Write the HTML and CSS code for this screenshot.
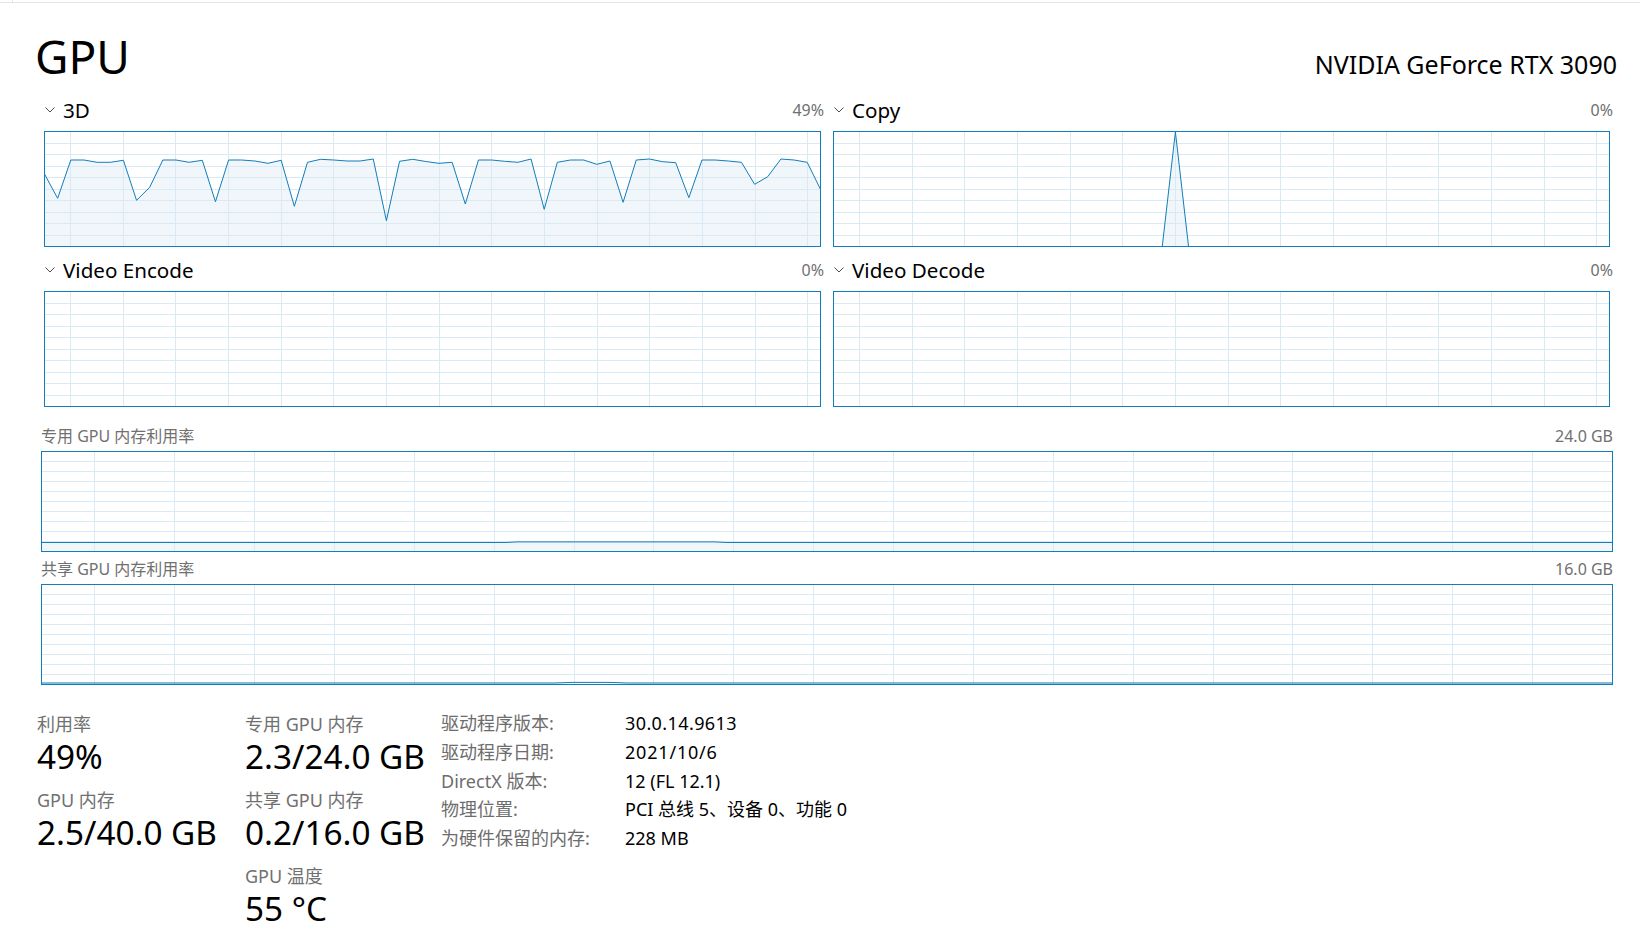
FILE: index.html
```html
<!DOCTYPE html>
<html lang="zh-CN">
<head>
<meta charset="utf-8">
<title>GPU</title>
<link rel="stylesheet" href="styles.css">
</head>
<body>
<svg class="defs" width="0" height="0" aria-hidden="true">
  <defs>
    <path id="egrid" d="M25.5 0V114M78.5 0V114M130.5 0V114M183.5 0V114M236.5 0V114M288.5 0V114M341.5 0V114M394.5 0V114M446.5 0V114M499.5 0V114M552.5 0V114M604.5 0V114M657.5 0V114M710.5 0V114M762.5 0V114M0 11.5H775M0 22.5H775M0 34.5H775M0 45.5H775M0 57.5H775M0 68.5H775M0 80.5H775M0 91.5H775M0 103.5H775"/>
    <path id="mgrid" d="M52.5 0V99M132.5 0V99M212.5 0V99M292.5 0V99M372.5 0V99M452.5 0V99M532.5 0V99M611.5 0V99M691.5 0V99M771.5 0V99M851.5 0V99M931.5 0V99M1011.5 0V99M1091.5 0V99M1171.5 0V99M1250.5 0V99M1330.5 0V99M1410.5 0V99M1490.5 0V99M0 9.5H1570M0 19.5H1570M0 29.5H1570M0 39.5H1570M0 49.5H1570M0 59.5H1570M0 69.5H1570M0 79.5H1570M0 89.5H1570"/>
    <path id="chev" d="M0.5 0.5L5 5L9.5 0.5"/>
  </defs>
</svg>
<div class="topline"><span class="tick"></span></div>
<main class="page">
  <header class="title-row">
    <h1 class="title">GPU</h1>
    <div class="device">NVIDIA GeForce RTX 3090</div>
  </header>

  <section class="engines">
    <div class="engine">
      <div class="ghead">
        <svg class="chev" viewBox="0 0 10 6"><use href="#chev"/></svg>
        <span class="gname">3D</span>
        <span class="gpct">49%</span>
      </div>
      <div class="graph">
        <svg viewBox="0 0 775 114" preserveAspectRatio="none">
          <polygon class="fill" points="-0.5,42 12.65,66.3 25.8,28 38.95,28 52.1,30.3 65.25,30.3 78.4,28.3 91.55,68.3 104.7,55.3 117.85,28 131,28 144.15,30.3 157.3,28.3 170.45,69.7 183.6,28 196.75,28 209.9,29 223.05,31.3 236.2,28.3 249.35,74.3 262.5,30.3 275.65,27.3 288.8,28 301.95,29 315.1,29 328.25,27 341.4,88.7 354.55,29.3 367.7,27.3 380.85,29.5 394,31.3 407.15,30.3 420.3,72 433.45,28 446.6,28 459.75,29.3 472.9,30.3 486.05,27 499.2,77.3 512.35,30.3 525.5,28 538.65,28 551.8,32.3 564.95,29 578.1,70.3 591.25,28 604.4,27 617.55,29.7 630.7,30.7 643.85,65.7 657,28 670.15,28 683.3,29 696.45,30.3 709.6,52.3 722.75,44.7 735.9,27 749.05,28 762.2,30.3 775.35,57 775.35,114 -0.5,114"/>
          <use class="grid" href="#egrid"/>
          <polyline class="line" points="-0.5,42 12.65,66.3 25.8,28 38.95,28 52.1,30.3 65.25,30.3 78.4,28.3 91.55,68.3 104.7,55.3 117.85,28 131,28 144.15,30.3 157.3,28.3 170.45,69.7 183.6,28 196.75,28 209.9,29 223.05,31.3 236.2,28.3 249.35,74.3 262.5,30.3 275.65,27.3 288.8,28 301.95,29 315.1,29 328.25,27 341.4,88.7 354.55,29.3 367.7,27.3 380.85,29.5 394,31.3 407.15,30.3 420.3,72 433.45,28 446.6,28 459.75,29.3 472.9,30.3 486.05,27 499.2,77.3 512.35,30.3 525.5,28 538.65,28 551.8,32.3 564.95,29 578.1,70.3 591.25,28 604.4,27 617.55,29.7 630.7,30.7 643.85,65.7 657,28 670.15,28 683.3,29 696.45,30.3 709.6,52.3 722.75,44.7 735.9,27 749.05,28 762.2,30.3 775.35,57"/>
        </svg>
      </div>
    </div>

    <div class="engine">
      <div class="ghead">
        <svg class="chev" viewBox="0 0 10 6"><use href="#chev"/></svg>
        <span class="gname">Copy</span>
        <span class="gpct">0%</span>
      </div>
      <div class="graph">
        <svg viewBox="0 0 775 114" preserveAspectRatio="none">
          <polygon class="fill" points="328.25,114 341.4,0 354.55,114"/>
          <use class="grid" href="#egrid"/>
          <polyline class="line" points="-0.5,114.5 328.25,114.5 341.4,0 354.55,114.5 775.5,114.5"/>
        </svg>
      </div>
    </div>

    <div class="engine">
      <div class="ghead">
        <svg class="chev" viewBox="0 0 10 6"><use href="#chev"/></svg>
        <span class="gname">Video Encode</span>
        <span class="gpct">0%</span>
      </div>
      <div class="graph">
        <svg viewBox="0 0 775 114" preserveAspectRatio="none">
          <use class="grid" href="#egrid"/>
        </svg>
      </div>
    </div>

    <div class="engine">
      <div class="ghead">
        <svg class="chev" viewBox="0 0 10 6"><use href="#chev"/></svg>
        <span class="gname">Video Decode</span>
        <span class="gpct">0%</span>
      </div>
      <div class="graph">
        <svg viewBox="0 0 775 114" preserveAspectRatio="none">
          <use class="grid" href="#egrid"/>
        </svg>
      </div>
    </div>
  </section>

  <section class="mem">
    <div class="mhead"><span>专用 GPU 内存利用率</span><span>24.0 GB</span></div>
    <div class="graph mgraph">
      <svg viewBox="0 0 1570 99" preserveAspectRatio="none">
        <polygon class="fill" points="0,90.5 463,90.5 476,89.9 672,89.9 685,90.5 1570,90.5 1570,99 0,99"/>
        <use class="grid" href="#mgrid"/>
        <polyline class="line" points="-1,90.5 463,90.5 476,89.9 672,89.9 685,90.5 1571,90.5"/>
      </svg>
    </div>
  </section>

  <section class="mem">
    <div class="mhead"><span>共享 GPU 内存利用率</span><span>16.0 GB</span></div>
    <div class="graph mgraph">
      <svg viewBox="0 0 1570 99" preserveAspectRatio="none">
        <polygon class="fill" points="0,98 512,98 530,97.4 568,97.4 586,98 1570,98 1570,99 0,99"/>
        <use class="grid" href="#mgrid"/>
        <polyline class="line" points="-1,98 512,98 530,97.4 568,97.4 586,98 1571,98"/>
      </svg>
    </div>
  </section>

  <section class="stats">
    <div class="col col1">
      <div class="stat">
        <div class="slabel">利用率</div>
        <div class="sval">49%</div>
      </div>
      <div class="stat">
        <div class="slabel">GPU 内存</div>
        <div class="sval">2.5/40.0 GB</div>
      </div>
    </div>
    <div class="col col2">
      <div class="stat">
        <div class="slabel">专用 GPU 内存</div>
        <div class="sval">2.3/24.0 GB</div>
      </div>
      <div class="stat">
        <div class="slabel">共享 GPU 内存</div>
        <div class="sval">0.2/16.0 GB</div>
      </div>
      <div class="stat">
        <div class="slabel">GPU 温度</div>
        <div class="sval">55 °C</div>
      </div>
    </div>
    <dl class="info">
      <dt>驱动程序版本:</dt><dd class="ver">30.0.14.9613</dd>
      <dt>驱动程序日期:</dt><dd class="date">2021/10/6</dd>
      <dt>DirectX 版本:</dt><dd>12 (FL 12.1)</dd>
      <dt>物理位置:</dt><dd>PCI 总线 5、设备 0、功能 0</dd>
      <dt>为硬件保留的内存:</dt><dd>228 MB</dd>
    </dl>
  </section>
</main>
</body>
</html>
```

FILE: styles.css
```css
* {
  box-sizing: border-box;
  margin: 0;
  padding: 0;
}

html, body {
  background: #ffffff;
}

body {
  width: 1640px;
  height: 951px;
  overflow: hidden;
  font-family: "Noto Sans", "Noto Sans CJK SC", sans-serif;
  color: #000000;
}

.defs {
  position: absolute;
  width: 0;
  height: 0;
  overflow: hidden;
}

.topline {
  display: flex;
  height: 3px;
  border-bottom: 1px solid #e4e4e4;
}

.tick {
  display: block;
  width: 1px;
  height: 2px;
  margin-left: 12px;
  background: #e4e4e4;
}

.page {
  padding: 29px 27px 0 41px;
}

/* title */
.title-row {
  display: flex;
  justify-content: space-between;
  align-items: baseline;
  margin-left: -6px;
  margin-right: -4px;
}

.title {
  font-size: 46px;
  font-weight: 400;
  line-height: 48px;
}

.device {
  font-size: 25px;
  line-height: 32px;
}

/* engine graphs */
.engines {
  display: grid;
  grid-template-columns: 1fr 1fr;
  column-gap: 12px;
  row-gap: 11px;
  margin: 18px 3px 0 3px;
}

.ghead {
  display: flex;
  align-items: center;
  height: 24px;
  line-height: 24px;
  margin-bottom: 9px;
}

.chev {
  display: block;
  width: 10px;
  height: 6px;
  margin-left: 1px;
  margin-right: 8px;
  fill: none;
  stroke: #4a4a4a;
  stroke-width: 1;
}

.gname {
  font-size: 20.6px;
}

.gpct {
  margin-left: auto;
  margin-right: -3px;
  font-size: 16px;
  color: #707070;
}

.graph {
  height: 116px;
  border: 1px solid #117dbb;
  background: #ffffff;
}

.graph svg {
  display: block;
  width: 100%;
  height: 100%;
}

.graph .fill {
  fill: #f1f6fa;
  stroke: none;
}

.graph .grid {
  fill: none;
  stroke: #d9eaf4;
  stroke-width: 1;
  shape-rendering: crispEdges;
}

.graph .line {
  fill: none;
  stroke: #117dbb;
  stroke-width: 1;
  stroke-linejoin: miter;
}

/* memory graphs */
.mem {
  margin-top: 19px;
}

.mem + .mem {
  margin-top: 7px;
}

.mhead {
  display: flex;
  justify-content: space-between;
  font-size: 16px;
  line-height: 20px;
  color: #707070;
  margin-bottom: 5px;
}

.mgraph {
  height: 101px;
}

/* stats */
.stats {
  display: flex;
  align-items: flex-start;
  margin: 27px 0 0 -4px;
}

.col1 {
  width: 208px;
}

.col2 {
  width: 196px;
}

.stat {
  margin-bottom: 12px;
}

.slabel {
  font-size: 18px;
  line-height: 24px;
  color: #707070;
}

.sval {
  font-size: 33.3px;
  line-height: 40px;
}

.info {
  display: grid;
  grid-template-columns: 184px auto;
  margin-top: -3px;
  font-size: 18px;
  line-height: 28.8px;
}

.info dt {
  color: #6d6d6d;
}

.info dd {
  color: #000000;
}

.info .ver {
  letter-spacing: 0.4px;
}

.info .date {
  letter-spacing: 0.8px;
}
```
